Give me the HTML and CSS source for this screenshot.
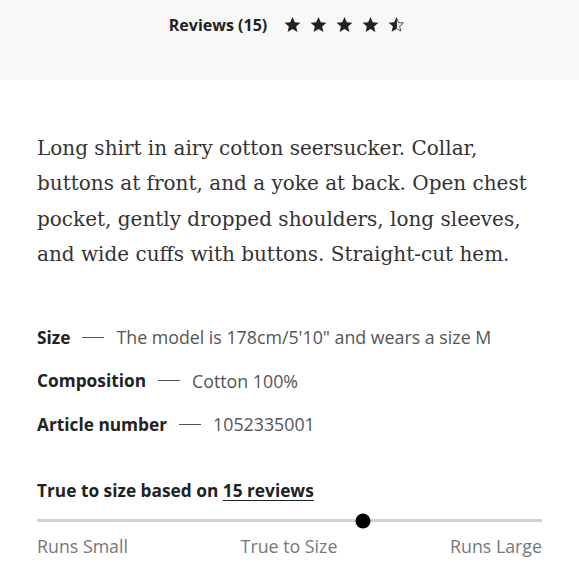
FILE: index.html
```html
<!DOCTYPE html>
<html>
<head>
<meta charset="utf-8">
<link rel="stylesheet" href="styles.css">
</head>
<body>
<header class="reviews-bar">
  <span class="reviews-title">Reviews (15)</span>
  <span class="stars">
    <svg class="star" viewBox="0 0 24 24"><path d="M12 2.5l2.9 6.6 7.1.6-5.4 4.7 1.6 7-6.2-3.7-6.2 3.7 1.6-7L2 9.7l7.1-.6z"/></svg>
    <svg class="star" viewBox="0 0 24 24"><path d="M12 2.5l2.9 6.6 7.1.6-5.4 4.7 1.6 7-6.2-3.7-6.2 3.7 1.6-7L2 9.7l7.1-.6z"/></svg>
    <svg class="star" viewBox="0 0 24 24"><path d="M12 2.5l2.9 6.6 7.1.6-5.4 4.7 1.6 7-6.2-3.7-6.2 3.7 1.6-7L2 9.7l7.1-.6z"/></svg>
    <svg class="star" viewBox="0 0 24 24"><path d="M12 2.5l2.9 6.6 7.1.6-5.4 4.7 1.6 7-6.2-3.7-6.2 3.7 1.6-7L2 9.7l7.1-.6z"/></svg>
    <svg class="star" viewBox="0 0 24 24"><path class="half-outline" d="M12 3.8l2.5 5.8 6.2.5-4.7 4.1 1.4 6.1L12 17.1z"/><path d="M12 2.5v15.1l-6.2 3.7 1.6-7L2 9.7l7.1-.6z"/></svg>
  </span>
</header>
<main class="content">
  <p class="description">Long shirt in airy cotton seersucker. Collar, buttons at front, and a yoke at back. Open chest pocket, gently dropped shoulders, long sleeves, and wide cuffs with buttons. Straight-cut hem.</p>
  <dl class="details">
    <div class="row"><dt>Size</dt><span class="dash"></span><dd>The model is 178cm/5'10" and wears a size M</dd></div>
    <div class="row"><dt>Composition</dt><span class="dash"></span><dd>Cotton 100%</dd></div>
    <div class="row"><dt>Article number</dt><span class="dash"></span><dd>1052335001</dd></div>
  </dl>
  <section class="fit">
    <h3 class="fit-title">True to size based on <a href="#">15 reviews</a></h3>
    <div class="track"><span class="knob" style="left: 64.5%"></span></div>
    <div class="fit-labels"><span>Runs Small</span><span>True to Size</span><span>Runs Large</span></div>
  </section>
</main>
</body>
</html>
```
FILE: styles.css
```css
* { box-sizing: border-box; }
html, body { margin: 0; padding: 0; background: #fff; }
body { font-family: "Open Sans", "Liberation Sans", sans-serif; color: #222; }
.reviews-bar {
  height: 80px;
  background: #f8f8f8;
  display: flex;
  align-items: flex-start;
  justify-content: center;
  padding-top: 13px;
  gap: 16px;
  padding-right: 4px;
}
.reviews-title { font-weight: 700; font-size: 16px; line-height: 24px; }
.stars { display: flex; gap: 7px; padding-top: 2px; }
.star { width: 19px; height: 19px; fill: #222; display: block; }
.star .half-outline { fill: none; stroke: #222; stroke-width: 1; }
.content { padding: 0 37px; }
.description {
  font-family: "DejaVu Serif", serif;
  font-size: 20px;
  line-height: 35.3px;
  margin: 51px 0 0;
  color: #333;
}
.details { margin: 53px 0 0; }
.row { display: flex; align-items: center; height: 24px; margin-bottom: 19.5px; }
.row dt { font-weight: 700; font-size: 17.3px; }
.dash { width: 22px; height: 1px; background: #555; margin: 0 12px; }
.row dd { margin: 0; color: #555; font-size: 17.8px; }
.fit { margin-top: 43px; }
.fit-title { font-size: 17.3px; font-weight: 700; margin: 0; line-height: 24px; }
.fit-title a { color: #222; text-decoration: underline; text-underline-offset: 3px; }
.track { position: relative; height: 3px; background: #d0d0d0; margin-top: 16px; }
.knob { position: absolute; top: 50%; width: 15px; height: 15px; background: #000; border-radius: 50%; transform: translate(-50%, -50%); }
.fit-labels { display: flex; justify-content: space-between; color: #777; font-size: 17.8px; margin-top: 12px; }
```
